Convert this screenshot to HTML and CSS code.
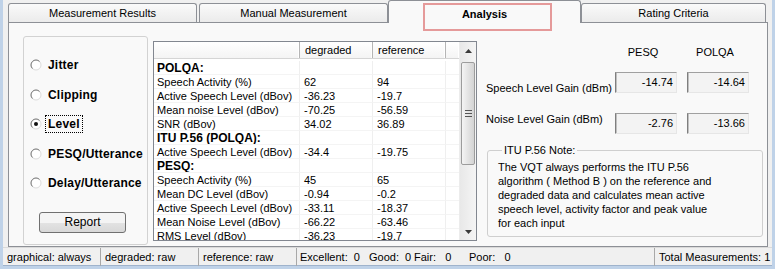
FILE: index.html
```html
<!DOCTYPE html>
<html lang="en">
<head>
    <meta charset="UTF-8">
    <title>VQT Analysis</title>
    <link rel="stylesheet" href="styles.css">
</head>
<body>
<div class="window">
    <!-- Tabs -->
    <div class="tabs">
        <div class="tab">Measurement Results</div>
        <div class="tab">Manual Measurement</div>
        <div class="tab active"><span class="mark"></span>Analysis</div>
        <div class="tab last">Rating Criteria</div>
    </div>

    <div class="panel">
        <!-- Options -->
        <div class="options">
            <div class="radio"><svg width="12" height="12" viewBox="0 0 12 12"><circle cx="6" cy="6" r="5" fill="#fff" stroke="#dcdcdc"/><path d="M2.46 9.54A5 5 0 0 1 9.54 2.46" fill="none" stroke="#7a7a7a"/></svg><span>Jitter</span></div>
            <div class="radio"><svg width="12" height="12" viewBox="0 0 12 12"><circle cx="6" cy="6" r="5" fill="#fff" stroke="#dcdcdc"/><path d="M2.46 9.54A5 5 0 0 1 9.54 2.46" fill="none" stroke="#7a7a7a"/></svg><span>Clipping</span></div>
            <div class="radio"><svg width="12" height="12" viewBox="0 0 12 12"><circle cx="6" cy="6" r="5" fill="#fff" stroke="#dcdcdc"/><path d="M2.46 9.54A5 5 0 0 1 9.54 2.46" fill="none" stroke="#7a7a7a"/><circle cx="6" cy="6" r="2" fill="#111"/></svg><span class="focus">Level</span></div>
            <div class="radio"><svg width="12" height="12" viewBox="0 0 12 12"><circle cx="6" cy="6" r="5" fill="#fff" stroke="#dcdcdc"/><path d="M2.46 9.54A5 5 0 0 1 9.54 2.46" fill="none" stroke="#7a7a7a"/></svg><span>PESQ/Utterance</span></div>
            <div class="radio"><svg width="12" height="12" viewBox="0 0 12 12"><circle cx="6" cy="6" r="5" fill="#fff" stroke="#dcdcdc"/><path d="M2.46 9.54A5 5 0 0 1 9.54 2.46" fill="none" stroke="#7a7a7a"/></svg><span>Delay/Utterance</span></div>
            <button class="report">Report</button>
        </div>

        <!-- Results grid -->
        <div class="results">
            <div class="grid">
                <div class="grid-head row">
                    <span></span><span>degraded</span><span>reference</span><span></span>
                </div>
                <div class="grid-body">
                    <div class="row"><span class="group">POLQA:</span><span></span><span></span><span></span></div>
                    <div class="row"><span>Speech Activity (%)</span><span>62</span><span>94</span><span></span></div>
                    <div class="row"><span>Active Speech Level (dBov)</span><span>-36.23</span><span>-19.7</span><span></span></div>
                    <div class="row"><span>Mean noise Level (dBov)</span><span>-70.25</span><span>-56.59</span><span></span></div>
                    <div class="row"><span>SNR (dBov)</span><span>34.02</span><span>36.89</span><span></span></div>
                    <div class="row"><span class="group">ITU P.56 (POLQA):</span><span></span><span></span><span></span></div>
                    <div class="row"><span>Active Speech Level (dBov)</span><span>-34.4</span><span>-19.75</span><span></span></div>
                    <div class="row"><span class="group">PESQ:</span><span></span><span></span><span></span></div>
                    <div class="row"><span>Speech Activity (%)</span><span>45</span><span>65</span><span></span></div>
                    <div class="row"><span>Mean DC Level (dBov)</span><span>-0.94</span><span>-0.2</span><span></span></div>
                    <div class="row"><span>Active Speech Level (dBov)</span><span>-33.11</span><span>-18.37</span><span></span></div>
                    <div class="row"><span>Mean Noise Level (dBov)</span><span>-66.22</span><span>-63.46</span><span></span></div>
                    <div class="row"><span>RMS Level (dBov)</span><span>-36.23</span><span>-19.7</span><span></span></div>
                </div>
            </div>
            <div class="vscroll">
                <div class="sb-btn"><svg width="7" height="4" viewBox="0 0 7 4"><path d="M0 4L3.5 0L7 4Z" fill="#3a3a3a"/></svg></div>
                <div class="sb-track">
                    <div class="sb-thumb"><span></span><span></span><span></span></div>
                </div>
                <div class="sb-btn"><svg width="7" height="4" viewBox="0 0 7 4"><path d="M0 0L3.5 4L7 0Z" fill="#3a3a3a"/></svg></div>
            </div>
        </div>

        <!-- Gains -->
        <div class="gains">
            <div class="gain-table">
                <span></span><span class="col-head">PESQ</span><span class="col-head">POLQA</span>
                <span class="gain-label first">Speech Level Gain (dBm)</span><span class="val first">-14.74</span><span class="val first">-14.64</span>
                <span class="gain-label second">Noise Level Gain (dBm)</span><span class="val second">-2.76</span><span class="val second">-13.66</span>
            </div>
            <fieldset class="note">
                <legend>ITU P.56 Note:</legend>
                <p>The VQT always performs the ITU P.56 algorithm ( Method B ) on the reference and degraded data and calculates mean active speech level, activity factor and peak value for each input</p>
            </fieldset>
        </div>
    </div>

    <!-- Status bar -->
    <div class="statusbar">
        <div class="seg s1">graphical: always</div>
        <div class="seg s2">degraded: raw</div>
        <div class="seg s3">reference: raw</div>
        <div class="seg s4"><span class="excellent">Excellent:&nbsp; 0</span><span class="good">Good:&nbsp; 0</span><span class="fair">Fair:&nbsp;&nbsp; 0</span><span>Poor:&nbsp;&nbsp; 0</span></div>
        <div class="seg s5">Total Measurements: 1</div>
    </div>
</div>
</body>
</html>
```

FILE: styles.css
```css
* {
    box-sizing: border-box;
}
body {
    margin: 0;
    width: 775px;
    height: 269px;
    overflow: hidden;
    background-color: #bfd2e8;
    font-family: "Liberation Sans", Arial, sans-serif;
    font-size: 11px;
    color: #000;
}
.window {
    margin-left: 3px;
    width: 769px;
    height: 266px;
    background-color: #f0f0f0;
    border-bottom: 1px solid #9fb3cc;
}

/* Tabs */
.tabs {
    display: flex;
    align-items: flex-end;
    height: 22px;
    padding-left: 5px;
}
.tab {
    width: 189px;
    height: 19px;
    margin-right: 2px;
    border: 1px solid #8d9096;
    border-bottom: none;
    border-radius: 3px 3px 0 0;
    background: linear-gradient(#fafafa, #ebebeb);
    text-align: center;
    line-height: 19px;
}
.tab.active {
    position: relative;
    z-index: 2;
    width: 193px;
    height: 23px;
    margin-left: -2px;
    margin-right: 0;
    margin-bottom: -1px;
    background: #f9f9f9;
    font-weight: bold;
    line-height: 26px;
}
.tab.last {
    width: 185px;
}
.mark {
    position: absolute;
    left: 34px;
    top: 2px;
    width: 129px;
    height: 28px;
    border: 2px solid #e59a9a;
}

/* Panel */
.panel {
    display: flex;
    width: 760px;
    height: 225px;
    margin-left: 5px;
    padding: 13px 0 0 14px;
    border: 1px solid #8d9096;
    background-color: #f9f9f9;
}
.options {
    display: flex;
    flex-direction: column;
    width: 125px;
    height: 209px;
    padding: 21px 0 0 6px;
    border: 1px solid #d2d2d2;
    border-radius: 3px;
}
.radio {
    display: flex;
    align-items: center;
    height: 14px;
    margin-bottom: 15.5px;
    font-size: 12px;
    font-weight: bold;
    letter-spacing: 0.2px;
}
.radio svg {
    margin-right: 6px;
    flex: none;
}
.radio .focus {
    outline: 1px dotted #000;
    outline-offset: 1px;
    padding: 0 1px;
    margin-left: -1px;
}
.report {
    width: 87px;
    height: 21px;
    margin: 6px 0 0 9px;
    padding: 0;
    border: 1px solid #707070;
    border-radius: 3px;
    background: linear-gradient(#f4f4f4 50%, #e3e3e3 50%, #d8d8d8);
    font-family: "Liberation Sans", Arial, sans-serif;
    font-size: 12px;
    color: #000;
}

/* Results grid */
.results {
    display: flex;
    width: 324px;
    height: 200px;
    margin: 5px 0 0 5px;
    border: 1px solid #828790;
    background-color: #fff;
}
.grid {
    width: 306px;
    overflow: hidden;
}
.row {
    display: grid;
    grid-template-columns: 146px 73px 73px 14px;
    height: 14px;
    line-height: 14px;
}
.row span {
    padding-left: 4px;
    white-space: nowrap;
    overflow: hidden;
    border-right: 1px solid #efefef;
    border-bottom: 1px solid #f4f4f4;
}
.row span:first-child {
    padding-left: 3px;
}
.row .group {
    font-weight: bold;
    font-size: 12px;
}
.grid-head {
    height: 17px;
    line-height: 16px;
    background: linear-gradient(#ffffff, #f4f4f4);
    border-bottom: 1px solid #d5d5d5;
}
.grid-head span {
    border-right: 1px solid #b5b5b5;
    border-bottom: none;
    box-shadow: inset -1px 0 #fff;
    padding-left: 5px;
}
.grid-body {
    padding-top: 2px;
}

/* Scrollbar */
.vscroll {
    display: flex;
    flex-direction: column;
    width: 17px;
    background: linear-gradient(90deg, #e8e8e8, #f5f5f5);
    border-left: 1px solid #ececec;
}
.sb-btn {
    display: flex;
    align-items: center;
    justify-content: center;
    height: 17px;
}
.sb-track {
    flex: 1;
    padding: 3px 1px 0 1px;
}
.sb-thumb {
    display: flex;
    flex-direction: column;
    align-items: center;
    justify-content: center;
    height: 103px;
    border: 1px solid #9c9c9c;
    border-radius: 2px;
    background: linear-gradient(90deg, #f4f4f4, #e0e0e0 60%, #d4d4d4);
}
.sb-thumb span {
    width: 7px;
    height: 1px;
    margin: 1px 0;
    background-color: #555;
}

/* Gains */
.gains {
    flex: 1;
    padding: 0 4px 0 9px;
}
.gain-table {
    display: grid;
    grid-template-columns: 119px 62px 62px;
    column-gap: 10px;
    margin-top: 9px;
}
.col-head {
    height: 14px;
    line-height: 14px;
    text-align: center;
    margin-right: 6px;
}
.val {
    height: 21px;
    padding-right: 3px;
    border: 1px solid;
    border-color: #a0a0a0 #e6e6e6 #e6e6e6 #7f7f7f;
    box-shadow: inset 1px 0 #c0c0c0;
    background-color: #f3f3f3;
    text-align: right;
    line-height: 18px;
}
.val.first {
    margin-top: 13px;
}
.val.second {
    margin-top: 18px;
}
.gain-label {
    white-space: nowrap;
    line-height: 14px;
}
.gain-label.first {
    margin-top: 22px;
}
.gain-label.second {
    margin-top: 17px;
}
.note {
    width: 276px;
    height: 94px;
    margin: 9px 0 0 1px;
    padding: 0 0 0 10px;
    border: 1px solid #cfcfcf;
    border-radius: 3px;
}
.note legend {
    margin-left: 4px;
    padding: 0 2px;
    line-height: 14px;
}
.note p {
    margin: 3px 0 0 0;
    width: 224px;
    line-height: 14px;
}

/* Status bar */
.statusbar {
    display: flex;
    height: 19px;
    border-top: 1px solid #dadada;
    line-height: 18px;
    white-space: nowrap;
}
.seg {
    border-left: 1px solid #a8a8a8;
    padding-left: 4px;
}
.s1 {
    width: 97px;
    border-left: none;
}
.s2 {
    width: 98px;
}
.s3 {
    width: 98px;
}
.s4 {
    width: 358px;
    padding-left: 3px;
}
.s4 span {
    display: inline-block;
}
.s4 .excellent {
    width: 69px;
}
.s4 .good {
    width: 45px;
}
.s4 .fair {
    width: 55px;
}
.s5 {
    flex: 1;
}
```
